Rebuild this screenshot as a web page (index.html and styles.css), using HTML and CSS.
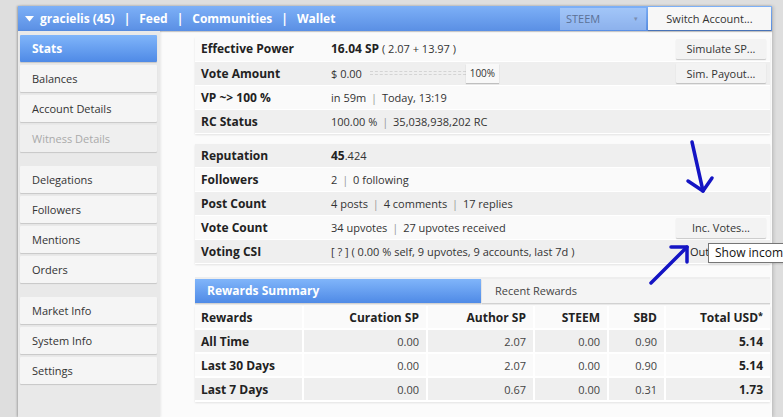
FILE: index.html
```html
<!DOCTYPE html>
<html lang="en">
<head>
    <meta charset="UTF-8">
    <meta name="viewport" content="width=device-width, initial-scale=1.0">
    <title>gracielis - Stats</title>
    <link rel="stylesheet" href="styles.css">
</head>
<body>

<div class="app">
    <!-- Top bar -->
    <div class="topbar">
        <div class="nav">
            <svg class="caret" width="9" height="6" viewBox="0 0 9 6"><path d="M0 0 L9 0 L4.5 5.5 Z" fill="#fff"/></svg>
            <span>gracielis (45)</span>
            <span class="sep">|</span>
            <span>Feed</span>
            <span class="sep">|</span>
            <span>Communities</span>
            <span class="sep">|</span>
            <span>Wallet</span>
        </div>
        <div class="topbar-right">
            <div class="coin-select">STEEM <span class="coin-arrow">&#9662;</span></div>
            <button class="switch-btn">Switch Account...</button>
        </div>
    </div>

    <div class="main">
        <!-- Side menu -->
        <ul class="menu">
            <li class="active">Stats</li>
            <li>Balances</li>
            <li>Account Details</li>
            <li class="disabled">Witness Details</li>
            <li class="group-start">Delegations</li>
            <li>Followers</li>
            <li>Mentions</li>
            <li>Orders</li>
            <li class="group-start">Market Info</li>
            <li>System Info</li>
            <li>Settings</li>
        </ul>

        <div class="content">
            <table class="stats">
                <tr class="light">
                    <td class="label">Effective Power</td>
                    <td class="value"><b>16.04 SP</b> ( 2.07 + 13.97 )</td>
                    <td class="action"><button class="btn">Simulate SP...</button></td>
                </tr>
                <tr class="dark">
                    <td class="label">Vote Amount</td>
                    <td class="value">
                        <div class="vote-amount">
                            <span>$ 0.00</span>
                            <div class="slider-track"></div>
                            <div class="slider-knob">100%</div>
                        </div>
                    </td>
                    <td class="action"><button class="btn">Sim. Payout...</button></td>
                </tr>
                <tr class="light">
                    <td class="label">VP ~&gt; 100 %</td>
                    <td class="value">in 59m <span class="sep">|</span> Today, 13:19</td>
                    <td class="action"></td>
                </tr>
                <tr class="dark">
                    <td class="label">RC Status</td>
                    <td class="value">100.00 % <span class="sep">|</span> 35,038,938,202 RC</td>
                    <td class="action"></td>
                </tr>
            </table>

            <table class="stats">
                <tr class="dark">
                    <td class="label">Reputation</td>
                    <td class="value"><b>45</b>.424</td>
                    <td class="action"></td>
                </tr>
                <tr class="light">
                    <td class="label">Followers</td>
                    <td class="value">2 <span class="sep">|</span> 0 following</td>
                    <td class="action"></td>
                </tr>
                <tr class="dark">
                    <td class="label">Post Count</td>
                    <td class="value">4 posts <span class="sep">|</span> 4 comments <span class="sep">|</span> 17 replies</td>
                    <td class="action"></td>
                </tr>
                <tr class="light">
                    <td class="label">Vote Count</td>
                    <td class="value">34 upvotes <span class="sep">|</span> 27 upvotes received</td>
                    <td class="action"><button class="btn">Inc. Votes...</button></td>
                </tr>
                <tr class="dark">
                    <td class="label">Voting CSI</td>
                    <td class="value">[ ? ] ( 0.00 % self, 9 upvotes, 9 accounts, last 7d )</td>
                    <td class="action"><button class="btn btn-hover">Out. Votes...</button></td>
                </tr>
            </table>

            <!-- Rewards -->
            <div class="tabs">
                <div class="tab tab-active">Rewards Summary</div>
                <div class="tab">Recent Rewards</div>
            </div>

            <table class="rewards">
                <colgroup>
                    <col style="width: 108px">
                    <col style="width: 124px">
                    <col style="width: 107px">
                    <col style="width: 74px">
                    <col style="width: 57px">
                    <col style="width: 105px">
                </colgroup>
                <tr class="head">
                    <th>Rewards</th>
                    <th>Curation SP</th>
                    <th>Author SP</th>
                    <th>STEEM</th>
                    <th>SBD</th>
                    <th>Total USD<span class="star">*</span></th>
                </tr>
                <tr class="dark">
                    <th>All Time</th>
                    <td>0.00</td>
                    <td>2.07</td>
                    <td>0.00</td>
                    <td>0.90</td>
                    <td class="total">5.14</td>
                </tr>
                <tr class="light">
                    <th>Last 30 Days</th>
                    <td>0.00</td>
                    <td>2.07</td>
                    <td>0.00</td>
                    <td>0.90</td>
                    <td class="total">5.14</td>
                </tr>
                <tr class="dark">
                    <th>Last 7 Days</th>
                    <td>0.00</td>
                    <td>0.67</td>
                    <td>0.00</td>
                    <td>0.31</td>
                    <td class="total">1.73</td>
                </tr>
            </table>
        </div>
    </div>
</div>

<!-- hover tooltip of the out votes button -->
<div class="tooltip">Show incoming votes</div>

<!-- hand drawn arrows -->
<svg class="arrows" width="783" height="417" viewBox="0 0 783 417">
    <g fill="none" stroke="#1414c4" stroke-width="3.5" stroke-linecap="round" stroke-linejoin="round">
        <path d="M692 142 L703 191"/>
        <path d="M688 181 L703 191 L712 178"/>
        <path d="M651 283 L687 247"/>
        <path d="M671 247 L687 247 L687 262"/>
    </g>
</svg>

</body>
</html>
```

FILE: styles.css
```css
html, body {
    margin: 0;
    height: 100%;
    overflow: hidden;
}
body {
    background-color: #dedede;
    font-family: "Open Sans", Arial, sans-serif;
    font-size: 11px;
    color: #333;
    position: relative;
}
.app {
    margin: 6px 0 0 18px;
    width: 754px;
    height: 411px;
    background-color: #fbfbfb;
    box-shadow: -1px 0 2px rgba(0, 0, 0, 0.25), 2px 0 3px rgba(0, 0, 0, 0.12);
    display: flex;
    flex-direction: column;
}

/* top bar */
.topbar {
    height: 25px;
    flex-shrink: 0;
    display: flex;
    justify-content: space-between;
    align-items: center;
    background: linear-gradient(#7db0f7, #5a8fe4);
    box-shadow: 0 1px 1px rgba(0, 0, 0, 0.2);
}
.nav {
    display: flex;
    align-items: center;
    padding-left: 7px;
    color: #fff;
    font-weight: bold;
    font-size: 12px;
}
.caret {
    margin-right: 6px;
}
.nav .sep {
    color: #fff;
    margin: 0 9px;
}
.topbar-right {
    display: flex;
    align-items: center;
    gap: 2px;
    padding-right: 1px;
}
.coin-select {
    width: 80px;
    height: 22px;
    line-height: 22px;
    padding-left: 6px;
    background-color: rgba(255, 255, 255, 0.3);
    color: #5b7196;
    font-size: 11px;
    position: relative;
}
.coin-arrow {
    position: absolute;
    right: 8px;
    font-size: 7px;
    color: #7a8db0;
}
.switch-btn {
    width: 123px;
    height: 23px;
    border: none;
    background-color: #f7f7f7;
    font-family: inherit;
    font-size: 11px;
    color: #333;
    padding: 0;
    box-shadow: 0 1px 1px rgba(0, 0, 0, 0.2);
}

.main {
    flex: 1;
    display: flex;
    min-height: 0;
}

/* side menu */
.menu {
    list-style: none;
    margin: 0;
    width: 140px;
    padding: 4px 0 0 2px;
    background-color: #e9e9e9;
    box-shadow: 1px 0 2px rgba(0, 0, 0, 0.08);
}
.menu li {
    width: 125px;
    height: 27px;
    line-height: 27px;
    padding-left: 12px;
    margin-bottom: 3px;
    background-color: #f5f5f5;
    box-shadow: 0 1px 1px rgba(0, 0, 0, 0.15);
    border-radius: 1px;
    color: #333;
}
.menu li.active {
    background: linear-gradient(#80b5fa, #4f8ae6);
    color: #fff;
    font-weight: bold;
    font-size: 12px;
}
.menu li.disabled {
    background-color: #efefef;
    color: #aaa;
}
/* collapses with the 3px bottom margin above it */
.menu li.group-start {
    margin-top: 14px;
}

/* content */
.content {
    flex: 1;
    padding: 6px 2px 0 35px;
}
.stats {
    width: 100%;
    border-collapse: collapse;
    box-shadow: 0 1px 2px rgba(0, 0, 0, 0.1);
    margin-bottom: 10px;
}
.stats td {
    height: 24px;
    padding: 0;
    box-sizing: border-box;
    border-bottom: 1px solid #fff;
}
.stats td.label {
    width: 136px;
    padding-left: 6px;
    font-weight: bold;
    font-size: 12px;
    color: #222;
}
.stats td.value b {
    font-size: 12px;
    color: #222;
}
.stats td.action {
    text-align: right;
    padding-right: 4px;
}
tr.light {
    background-color: #fafafa;
}
tr.dark {
    background-color: #efefef;
}
.sep {
    color: #999;
    margin: 0 2px;
}

.btn {
    width: 90px;
    height: 20px;
    padding: 0;
    border: none;
    border-radius: 1px;
    background-color: #f3f3f3;
    box-shadow: 0 1px 1px rgba(0, 0, 0, 0.2);
    font-family: inherit;
    font-size: 11px;
    color: #333;
    vertical-align: middle;
}
.btn-hover {
    background-color: transparent;
    box-shadow: none;
    color: #222;
}

.vote-amount {
    display: flex;
    align-items: center;
}
.slider-track {
    width: 96px;
    height: 2px;
    margin-left: 8px;
    border-top: 1px dashed #d4d4d4;
    border-bottom: 1px dashed #d4d4d4;
}
.slider-knob {
    width: 33px;
    height: 19px;
    line-height: 19px;
    text-align: center;
    background-color: #f8f8f8;
    box-shadow: 0 1px 1px rgba(0, 0, 0, 0.2);
    font-size: 10px;
}

/* rewards tabs */
.tabs {
    display: flex;
    gap: 1px;
    margin-top: 13px;
    padding: 2px 0;
    background-color: #eeeeee;
}
.tab {
    flex: 1;
    height: 24px;
    line-height: 23px;
    padding-left: 13px;
    background-color: #f4f4f4;
    box-shadow: 0 1px 1px rgba(0, 0, 0, 0.12);
    color: #444;
}
.tab-active {
    flex: 0 0 274px;
    padding-left: 12px;
    background: linear-gradient(#80b5fa, #4f8ae6);
    color: #fff;
    font-weight: bold;
    font-size: 12px;
}

.rewards {
    width: 100%;
    margin-top: 1px;
    border-collapse: collapse;
    table-layout: fixed;
    box-shadow: 0 1px 2px rgba(0, 0, 0, 0.1);
}
.rewards th,
.rewards td {
    height: 24px;
    padding: 0 7px;
    box-sizing: border-box;
    border: 2px solid #fff;
    text-align: right;
    color: #444;
}
.rewards th {
    font-size: 12px;
    color: #222;
}
.rewards th:first-child {
    text-align: left;
    padding-left: 6px;
    border-left: none;
}
.rewards td:last-child,
.rewards th:last-child {
    border-right: none;
}
.rewards tr.head th {
    height: 23px;
    background-color: #fafafa;
    border-top: none;
}
.rewards td.total {
    font-weight: bold;
    font-size: 12px;
    color: #222;
}
.star {
    font-size: 9px;
    vertical-align: top;
}

/* tooltip over the out votes button */
.tooltip {
    position: absolute;
    left: 708px;
    top: 243px;
    height: 18px;
    line-height: 18px;
    padding: 0 6px 0 6px;
    border: 1px solid #767676;
    background-color: #fff;
    color: #111;
    font-size: 12px;
    white-space: nowrap;
    box-shadow: 1px 1px 2px rgba(0, 0, 0, 0.15);
}

.arrows {
    position: absolute;
    left: 0;
    top: 0;
    pointer-events: none;
}
```
